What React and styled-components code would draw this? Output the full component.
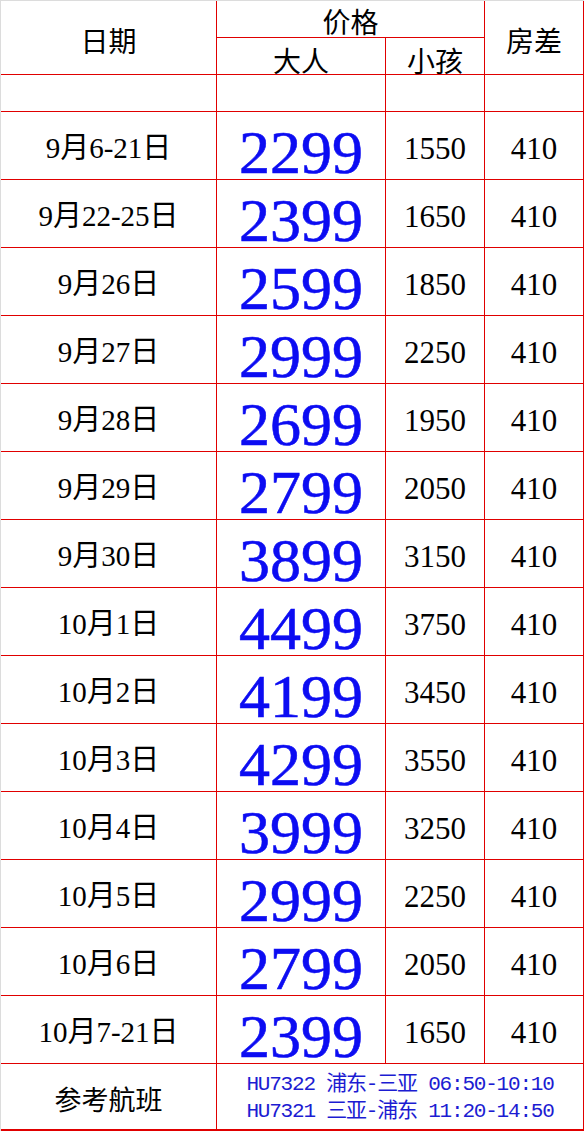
import { Fragment } from 'react';
import styled, { createGlobalStyle } from 'styled-components';

const GlobalStyle = createGlobalStyle`
  html, body {
    margin: 0;
    padding: 0;
    background: #fff;
  }
`;

const RED = '#e00000';

const Sheet = styled.div`
  display: grid;
  grid-template-columns: 216px 169px 99px 100px;
  grid-template-rows: 37px 37px 37px repeat(14, 68px) 67px;
  width: 584px;
  box-sizing: border-box;
  border-top: 1px solid #dcdcdc;
  border-left: 1px solid #dcdcdc;
  background: #fff;
`;

const Cell = styled.div`
  box-sizing: border-box;
  display: flex;
  align-items: center;
  justify-content: center;
  border-right: ${(p) => (p.$edge ? 2 : 1)}px solid ${RED};
  border-bottom: ${(p) => (p.$bottom ? 2 : 1)}px solid ${RED};
  grid-column: ${(p) => p.$col || 'auto'};
  grid-row: ${(p) => p.$row || 'auto'};
  padding-top: ${(p) => p.$shift || 0}px;
  color: #000;
  line-height: 1;
  white-space: nowrap;
`;

const Head = styled.span`
  font-family: 'Noto Sans CJK SC', sans-serif;
  font-size: ${(p) => p.$size || 28}px;
`;

const DateText = styled.span`
  font-family: 'Liberation Serif', 'Noto Sans CJK SC', serif;
  font-size: 29px;
`;

const BigPrice = styled.span`
  font-family: 'Liberation Serif', serif;
  font-size: 62px;
  color: #0c0cf2;
  -webkit-text-stroke: 0.6px #0c0cf2;
`;

const Num = styled.span`
  font-family: 'Liberation Serif', serif;
  font-size: 31px;
`;

const Flights = styled.div`
  display: flex;
  flex-direction: column;
  gap: 6px;
  font-family: 'Liberation Mono', 'Noto Sans CJK SC', monospace;
  font-size: 21px;
  letter-spacing: -1.2px;
  color: #1c1cd2;
`;

const rows = [
  ['9月6-21日', '2299', '1550', '410'],
  ['9月22-25日', '2399', '1650', '410'],
  ['9月26日', '2599', '1850', '410'],
  ['9月27日', '2999', '2250', '410'],
  ['9月28日', '2699', '1950', '410'],
  ['9月29日', '2799', '2050', '410'],
  ['9月30日', '3899', '3150', '410'],
  ['10月1日', '4499', '3750', '410'],
  ['10月2日', '4199', '3450', '410'],
  ['10月3日', '4299', '3550', '410'],
  ['10月4日', '3999', '3250', '410'],
  ['10月5日', '2999', '2250', '410'],
  ['10月6日', '2799', '2050', '410'],
  ['10月7-21日', '2399', '1650', '410'],
];

const App = () => {
  return (
    <>
      <GlobalStyle />
      <Sheet>
        {/* 表头 */}
        <Cell $col="1" $row="1 / span 2" $shift={5}>
          <Head>日期</Head>
        </Cell>
        <Cell $col="2 / span 2" $row="1" $shift={4}>
          <Head>价格</Head>
        </Cell>
        <Cell $col="4" $row="1 / span 2" $edge $shift={5}>
          <Head>房差</Head>
        </Cell>
        <Cell $col="2" $row="2" $shift={7}>
          <Head>大人</Head>
        </Cell>
        <Cell $col="3" $row="2" $shift={8}>
          <Head>小孩</Head>
        </Cell>

        {/* 空行 */}
        <Cell $col="1" $row="3" />
        <Cell $col="2" $row="3" />
        <Cell $col="3" $row="3" />
        <Cell $col="4" $row="3" $edge />

        {rows.map(([date, adult, child, room]) => (
          <Fragment key={date}>
            <Cell $shift={5}>
              <DateText>{date}</DateText>
            </Cell>
            <Cell $shift={13}>
              <BigPrice>{adult}</BigPrice>
            </Cell>
            <Cell $shift={5}>
              <Num>{child}</Num>
            </Cell>
            <Cell $edge $shift={5}>
              <Num>{room}</Num>
            </Cell>
          </Fragment>
        ))}

        {/* 航班 */}
        <Cell $bottom $shift={4}>
          <Head $size={27}>参考航班</Head>
        </Cell>
        <Cell $col="2 / span 3" $bottom $edge $shift={3}>
          <Flights>
            <span>HU7322 浦东-三亚 06:50-10:10</span>
            <span>HU7321 三亚-浦东 11:20-14:50</span>
          </Flights>
        </Cell>
      </Sheet>
    </>
  );
};

export default App;
